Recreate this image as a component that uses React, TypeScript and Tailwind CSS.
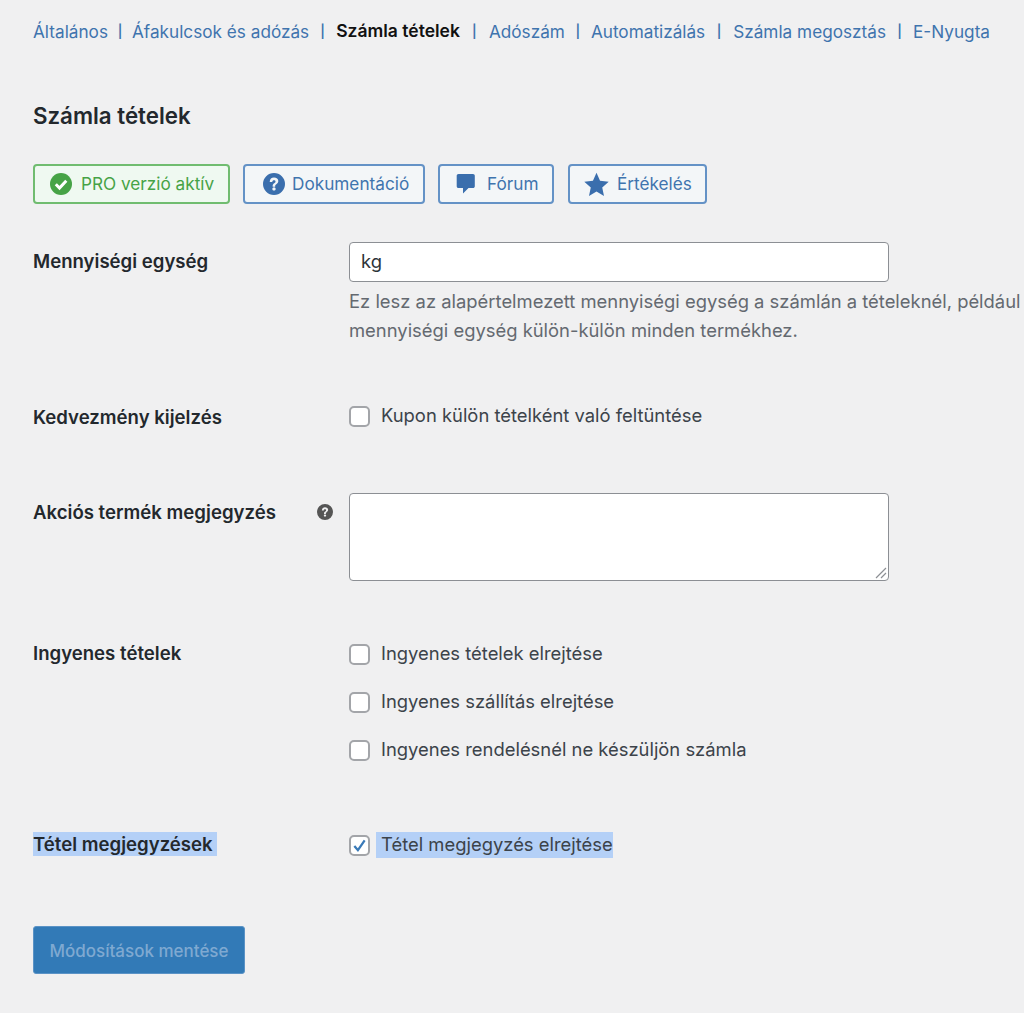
import { ReactNode } from 'react';

const TABS = [
  { label: 'Általános', sep: '' },
  { label: 'Áfakulcsok és adózás', sep: 'w-[24px]' },
  { label: 'Számla tételek', active: true, sep: 'w-[27px]' },
  { label: 'Adószám', sep: 'w-[29px]' },
  { label: 'Automatizálás', sep: 'w-[26px]' },
  { label: 'Számla megosztás', sep: 'w-[28px]' },
  { label: 'E-Nyugta', sep: 'w-[27px]' },
];

function HelpIcon({ className }: { className: string }) {
  return (
    <svg viewBox="0 0 20 20" className={className} fill="currentColor">
      <path
        fillRule="evenodd"
        d="M10 0a10 10 0 1 0 0 20 10 10 0 0 0 0-20Zm-1.2 12.4v-.7c0-1 .4-1.6 1.4-2.3.8-.5 1.2-.9 1.2-1.5 0-.7-.6-1.2-1.4-1.2-.9 0-1.5.5-1.6 1.5H6.1C6.2 5.500 7.700 4.200 10 4.200c2.300 0 3.900 1.200 3.900 3.100 0 1.300-.6 2.100-1.800 2.900-.8.5-1 .8-1 1.500v.7H8.800Zm-.3 2.100c0-.8.7-1.500 1.500-1.500s1.500.7 1.500 1.500-.7 1.500-1.500 1.500-1.500-.7-1.500-1.500Z"
      />
    </svg>
  );
}

function ActionButton({
  icon,
  children,
  green,
  className,
}: {
  icon: ReactNode;
  children: ReactNode;
  green?: boolean;
  className: string;
}) {
  return (
    <a
      className={`flex h-[40px] items-center rounded-[4px] border-2 text-[17.2px] ${
        green
          ? 'border-[#70bc70] bg-[#eff9f1] text-[#46a346]'
          : 'border-[#6492c6] bg-[#f3f6f8] text-[#3f74ae]'
      } ${className}`}
    >
      {icon}
      {children}
    </a>
  );
}

function Check({ label, checked, selected }: { label: string; checked?: boolean; selected?: boolean }) {
  return (
    <label className="flex h-[24px] items-center">
      <span className="flex h-[21px] w-[21px] shrink-0 items-center justify-center rounded-[5px] border-2 border-[#a3a5a9] bg-white">
        {checked && (
          <svg viewBox="0 0 16 16" className="h-[15px] w-[15px]">
            <path d="M2.500 8.500 6.300 13 13.500 2.500" fill="none" stroke="#3a7ab8" strokeWidth="2.400" />
          </svg>
        )}
      </span>
      <span
        className={
          selected
            ? 'ml-[6px] flex h-[26px] items-center bg-[#b4d0f7] pl-[5px] text-[18.4px] text-[#3c434a]'
            : 'ml-[11px] text-[18.4px] text-[#3c434a]'
        }
      >
        {label}
      </span>
    </label>
  );
}

function Row({
  label,
  selected,
  children,
  className,
  labelClass = '',
}: {
  label: ReactNode;
  selected?: boolean;
  children: ReactNode;
  className: string;
  labelClass?: string;
}) {
  return (
    <div className={`flex ${className}`}>
      <div className={`w-[316px] shrink-0 ${labelClass}`}>
        <span
          className={`inline-block text-[18.6px] font-semibold leading-[24px] text-[#23282d] ${
            selected ? 'bg-[#b4d0f7] pr-[4px]' : ''
          }`}
        >
          {label}
        </span>
      </div>
      <div className="min-w-0">{children}</div>
    </div>
  );
}

export default function App() {
  return (
    <div className="h-[1013px] w-[1024px] overflow-hidden bg-[#f0f0f1] pl-[33px] pt-[19px] font-['Inter',sans-serif]">
      <nav className="flex h-[25px] items-center whitespace-nowrap text-[17.2px] text-[#3f74ae]">
        {TABS.map((tab, i) => (
          <span key={tab.label} className="flex items-center">
            {i > 0 && <span className={`flex justify-center text-[13px] font-semibold ${tab.sep}`}>|</span>}
            <span className={tab.active ? 'text-[17.5px] font-semibold text-[#111111]' : ''}>{tab.label}</span>
          </span>
        ))}
      </nav>

      <h2 className="mt-[55px] text-[22.3px] font-semibold leading-[34px] text-[#23282d]">Számla tételek</h2>

      <div className="mt-[31px] flex gap-[13px]">
        <ActionButton green className="w-[197px] pl-[15px]" icon={
          <svg viewBox="0 0 22 22" className="mr-[9px] h-[22px] w-[22px]">
            <circle cx="11" cy="11" r="11" fill="#46a346" />
            <path d="M5.800 11.300 9.500 15 16.300 7.800" fill="none" stroke="#ffffff" strokeWidth="3" />
          </svg>
        }>
          PRO verzió aktív
        </ActionButton>
        <ActionButton className="w-[182px] pl-[18px]" icon={<HelpIcon className="mr-[7px] h-[22px] w-[22px] text-[#3a6ead]" />}>
          Dokumentáció
        </ActionButton>
        <ActionButton className="w-[116px] pl-[16px]" icon={
          <svg viewBox="0 0 20 22" className="mr-[11px] h-[22px] w-[20px]" fill="#3a6ead">
            <path d="M2.500 1h14.500c1 0 1.800.8 1.800 1.800v10.400c0 1-.8 1.800-1.800 1.800h-4.500L7 20.500V15H2.500c-1 0-1.800-.8-1.800-1.800V2.800C.700 1.800 1.500 1 2.500 1Z" />
          </svg>
        }>
          Fórum
        </ActionButton>
        <ActionButton className="ml-px w-[139px] pl-[14px]" icon={
          <svg viewBox="0 0 24 24" className="mr-[8px] h-[25px] w-[25px]" fill="#3a6ead">
            <path d="M12 .800 15.400 8.400 23.700 9.300 17.500 14.800 19.200 23 12 18.800 4.800 23 6.500 14.800 .300 9.300 8.600 8.400Z" />
          </svg>
        }>
          Értékelés
        </ActionButton>
      </div>

      <Row label="Mennyiségi egység" labelClass="pt-[6px]" className="mt-[39px]">
        <div className="-mt-px flex h-[40px] w-[540px] items-center rounded-[4px] border border-[#8c8f94] bg-white pl-[11px] text-[18.4px] text-[#2c3338]">
          kg
        </div>
        <p className="mt-[5px] whitespace-nowrap text-[18.4px] leading-[29px] text-[#646970]">
          Ez lesz az alapértelmezett mennyiségi egység a számlán a tételeknél, például
          <br />
          mennyiségi egység külön-külön minden termékhez.
        </p>
      </Row>

      <Row label="Kedvezmény kijelzés" labelClass="pt-px" className="mt-[59px]">
        <Check label="Kupon külön tételként való feltüntése" />
      </Row>

      <Row
        className="mt-[63px]"
        labelClass="pt-[7px]"
        label={
          <span className="flex w-[300px] items-center justify-between">
            Akciós termék megjegyzés
            <HelpIcon className="h-[16px] w-[16px] text-[#555555]" />
          </span>
        }
      >
        <div className="relative h-[88px] w-[540px] rounded-[4px] border border-[#8c8f94] bg-white">
          <svg viewBox="0 0 12 12" className="absolute bottom-[1px] right-[1px] h-[12px] w-[12px]">
            <path d="M1 11 11 1M6 11l5-5" stroke="#8c8f94" strokeWidth="1.200" fill="none" />
          </svg>
        </div>
      </Row>

      <Row label="Ingyenes tételek" labelClass="-mt-px" className="mt-[61px]">
        <div className="flex flex-col gap-[24px]">
          <Check label="Ingyenes tételek elrejtése" />
          <Check label="Ingyenes szállítás elrejtése" />
          <Check label="Ingyenes rendelésnél ne készüljön számla" />
        </div>
      </Row>

      <Row label="Tétel megjegyzések" selected labelClass="-mt-px" className="mt-[71px]">
        <Check label="Tétel megjegyzés elrejtése" checked selected />
      </Row>

      <button className="mt-[69px] h-[48px] w-[212px] rounded-[3px] border border-[#5b93c6] bg-[#327ab7] pt-[3px] text-[17px] font-medium text-[#7fa9d1]">
        Módosítások mentése
      </button>
    </div>
  );
}
